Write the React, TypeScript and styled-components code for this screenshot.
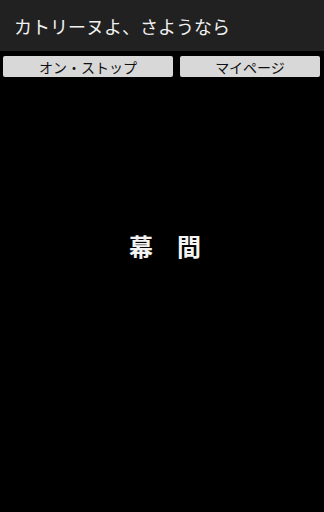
import styled, { createGlobalStyle } from 'styled-components';

const GlobalStyle = createGlobalStyle`
  html, body {
    margin: 0;
    padding: 0;
    background: #000;
  }
  body {
    font-family: "Noto Sans CJK JP", "DejaVu Sans", sans-serif;
  }
`;

export default function App() {
  return (
    <>
      <GlobalStyle />
      <Screen>
        <TitleBar>
          <Title>カトリーヌよ、さようなら</Title>
        </TitleBar>
        <ButtonRow>
          <MenuButton>オン・ストップ</MenuButton>
          <MenuButton>マイページ</MenuButton>
        </ButtonRow>
        <Stage>
          <Intermission>幕　間</Intermission>
        </Stage>
      </Screen>
    </>
  );
}

const Screen = styled.main`
  width: 324px;
  height: 512px;
  display: flex;
  flex-direction: column;
  background: #000;
  overflow: hidden;
`;

const TitleBar = styled.header`
  height: 51px;
  background: #212121;
  display: flex;
  align-items: center;
  padding-left: 14px;
`;

const Title = styled.h1`
  margin: 0;
  font-size: 18px;
  font-weight: 400;
  color: #f2f2f2;
  line-height: 1;
`;

const ButtonRow = styled.nav`
  display: grid;
  grid-template-columns: 170px 140px;
  column-gap: 7px;
  padding: 5px 4px 0 3px;
`;

const MenuButton = styled.button`
  height: 21px;
  border: none;
  border-radius: 2px;
  background: #d8d8d8;
  color: #111;
  font-family: inherit;
  font-size: 14px;
  line-height: 1;
  padding: 0;
`;

const Stage = styled.section`
  flex: 1;
  display: flex;
  justify-content: center;
  padding: 157px 0 0 6px;
`;

const Intermission = styled.div`
  font-size: 24px;
  font-weight: 700;
  color: #f4f4f4;
  line-height: 1;
  height: 24px;
`;
